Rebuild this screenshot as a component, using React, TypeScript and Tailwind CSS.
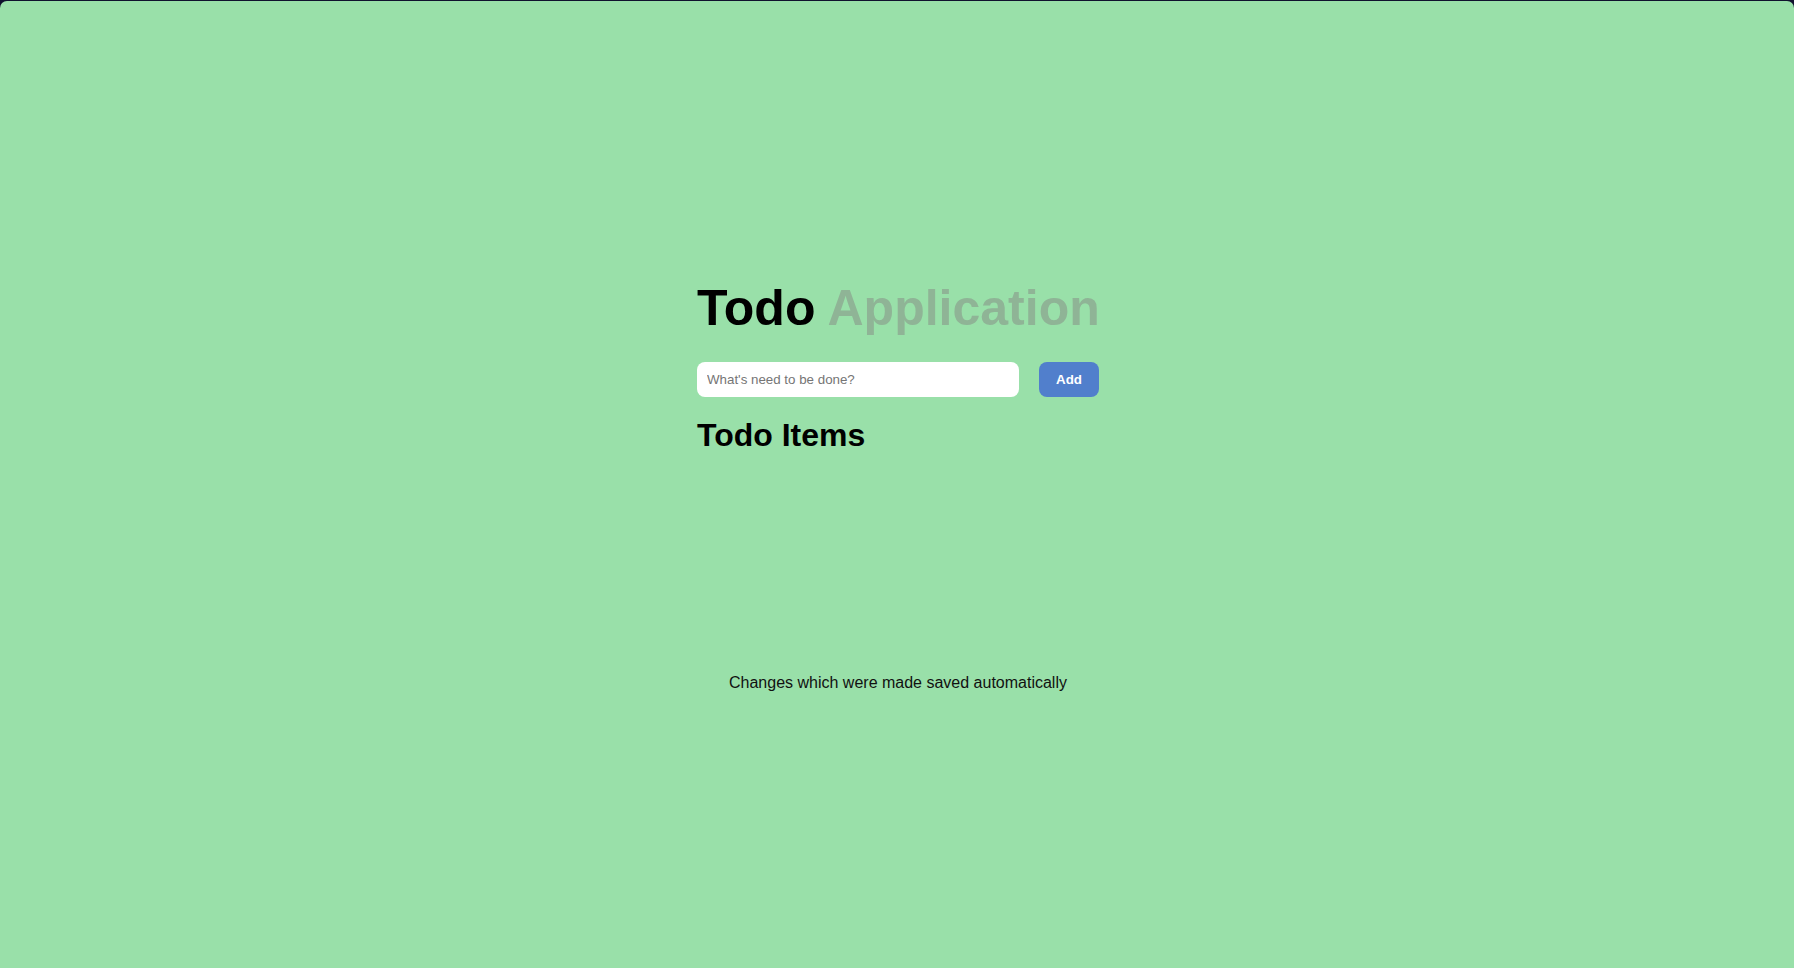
import React, { useState } from "react";

export default function App() {
  const [todo, setTodo] = useState("");

  return (
    <div className="h-screen w-full bg-[#10122e] pt-px" style={{ fontFamily: '"Liberation Sans", Arial, sans-serif' }}>
      <main className="flex h-full w-full flex-col items-center rounded-t-[7px] bg-[#99e0a9] pl-[2px] pt-[279px]">
        <div className="flex w-[402px] flex-col">
          {/* Title */}
          <h1 className="whitespace-nowrap text-[50px] font-bold leading-[57px] text-black">
            Todo <span className="text-[#8fb496]">Application</span>
          </h1>

          {/* New todo form */}
          <form className="mt-[25px] flex gap-5" onSubmit={(e) => e.preventDefault()}>
            <input
              type="text"
              value={todo}
              onChange={(e) => setTodo(e.target.value)}
              placeholder="What's need to be done?"
              className="h-[35px] w-[322px] rounded-lg bg-white px-[10px] text-[13.33px] text-black outline-none placeholder:text-[#757575]"
            />
            <button type="submit" className="h-[35px] w-[60px] rounded-lg bg-[#517fcc] text-[13.33px] font-bold text-white">
              Add
            </button>
          </form>

          {/* List */}
          <h2 className="mt-[20px] text-[32px] font-bold leading-[37px] text-black">Todo Items</h2>
          <ul className="h-[220px]"></ul>
        </div>

        <p className="text-[16px] leading-[18px] text-[#111]">Changes which were made saved automatically</p>
      </main>
    </div>
  );
}
